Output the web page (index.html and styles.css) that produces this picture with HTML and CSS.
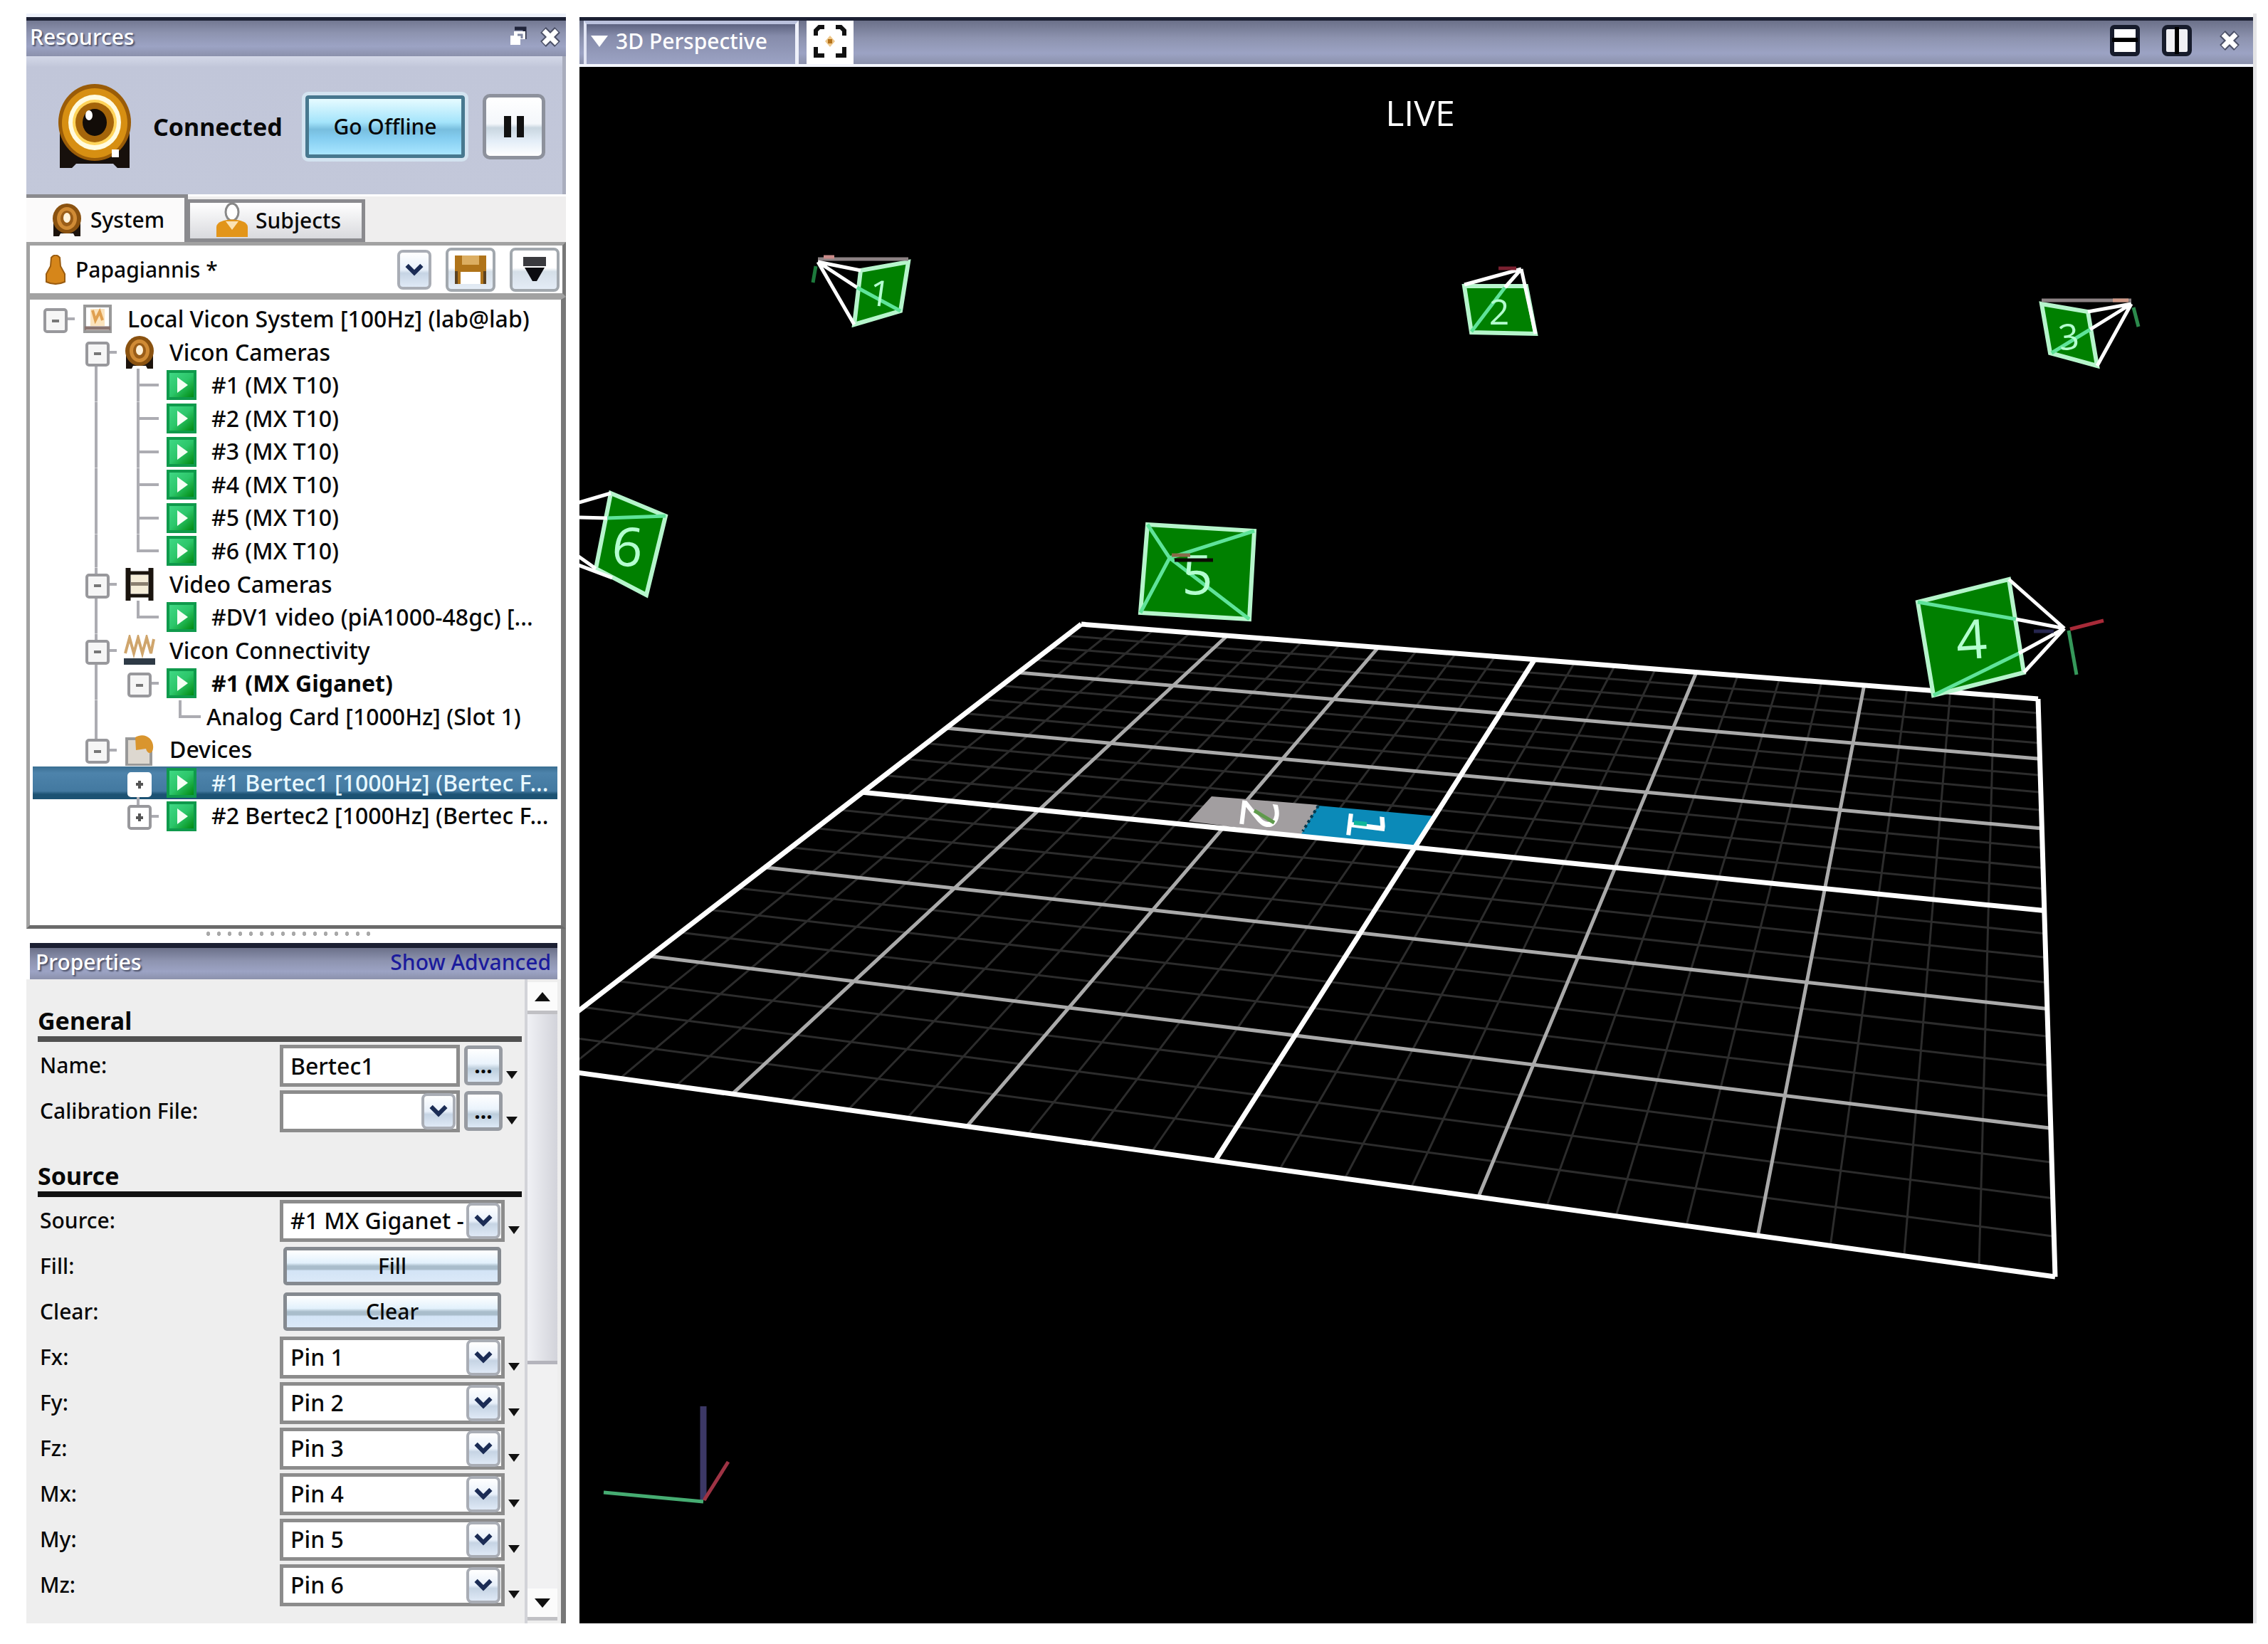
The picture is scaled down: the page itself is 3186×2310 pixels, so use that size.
FILE: index.html
```html
<!DOCTYPE html>
<html lang="en">
<head>
<meta charset="utf-8">
<title>Resources - 3D Perspective</title>
<link rel="stylesheet" href="styles.css">
</head>
<body>
<svg class="defs" aria-hidden="true">
  <defs>
    <linearGradient id="gPlay" x1="0" y1="0" x2="1" y2="1"><stop offset="0" stop-color="#3fd884"/><stop offset=".5" stop-color="#2cc66a"/><stop offset="1" stop-color="#008a10"/></linearGradient>
  </defs>
  <symbol id="play" viewBox="0 0 42 42"><rect width="42" height="42" fill="#0f9a4c"/><rect x="4" y="4" width="34" height="34" fill="url(#gPlay)"/><path d="M15 10V32L30 21Z" fill="#f4fff4"/></symbol>
  <symbol id="cam" viewBox="0 0 42 46"><path d="M2 20V46H10L12 42H30L32 46H40V20Z" fill="#1c130c"/><ellipse cx="21" cy="21" rx="20" ry="21" fill="#8a5210"/><ellipse cx="21" cy="21" rx="14" ry="16" fill="#d08b35"/><ellipse cx="21" cy="21" rx="9" ry="11" fill="#9a5d18"/><ellipse cx="21" cy="20" rx="5" ry="7" fill="#fff3dc"/></symbol>
  <symbol id="sys" viewBox="0 0 40 40"><rect x="2" y="2" width="36" height="36" fill="#fff" stroke="#999" stroke-width="4"/><rect x="10" y="6" width="20" height="24" fill="#fbe3bd"/><path d="M13 8L17 22L23 10L27 22" fill="none" stroke="#e0a050" stroke-width="4"/><path d="M2 33H38" stroke="#8a7470" stroke-width="5"/></symbol>
  <symbol id="film" viewBox="0 0 44 46"><path d="M6 0V46M38 0V46" stroke="#1a140e" stroke-width="7"/><path d="M8 7H36M8 39H36" stroke="#1a140e" stroke-width="5"/><rect x="10" y="10" width="24" height="10" fill="#f4ecd8"/><rect x="10" y="20" width="24" height="5" fill="#8a7f70"/><rect x="10" y="25" width="24" height="11" fill="#f4ecd8"/></symbol>
  <symbol id="conn" viewBox="0 0 44 44"><path d="M2 26L8 4L14 26L20 4L26 26L32 4L38 26L42 6" fill="none" stroke="#cfa56c" stroke-width="4"/><rect y="33" width="44" height="9" fill="#2e3a46"/></symbol>
  <symbol id="dev" viewBox="0 0 42 44"><path d="M3 6H24L37 22V43H3Z" fill="#ddd8d0" stroke="#999" stroke-width="4"/><path d="M15 4C28 -4 42 6 40 20C39 28 32 28 30 20L16 22Z" fill="#d9952e"/></symbol>
  <symbol id="chev" viewBox="0 0 30 20"><path d="M3 3L15 15L27 3" fill="none" stroke="#1b2c55" stroke-width="7"/></symbol>
  <symbol id="x" viewBox="0 0 28 28"><path d="M4 4L24 24M24 4L4 24" stroke="#4a4f66" stroke-width="11"/><path d="M5 5L23 23M23 5L5 23" stroke="#fff" stroke-width="7"/></symbol>
</svg>
<main class="app">
  <aside class="side">
    <header class="bar side-bar">
      <h1 class="bar-title">Resources</h1>
      <button class="bare" aria-label="Restore"><svg width="28" height="30" viewBox="0 0 28 30"><path d="M10 3H24V18" fill="none" stroke="#20243a" stroke-width="5"/><path d="M9 7H25V18H18V26H4V13H9Z" fill="#fff"/><path d="M14 12H20V17" fill="none" stroke="#8087a2" stroke-width="3"/></svg></button>
      <button class="bare" aria-label="Close"><svg width="28" height="28"><use href="#x"/></svg></button>
    </header>
    <section class="status">
      <svg class="bigcam" viewBox="0 0 104 120" aria-hidden="true"><path d="M3 60V118H20L26 112H78L84 118H101V60Z" fill="#17100c"/><ellipse cx="52" cy="54" rx="51" ry="54" fill="#9a5c08"/><ellipse cx="52" cy="55" rx="46" ry="49" fill="#d78f12"/><ellipse cx="52" cy="54" rx="37" ry="39" fill="#fffbe0"/><ellipse cx="52" cy="54" rx="31" ry="32" fill="#ffd45a"/><ellipse cx="52" cy="54" rx="27" ry="28" fill="#a5650a"/><ellipse cx="52" cy="54" rx="17" ry="19" fill="#120c08"/><ellipse cx="44" cy="44" rx="5" ry="7" fill="#fff"/><rect x="76" y="92" width="10" height="11" fill="#fff"/></svg>
      <strong class="state">Connected</strong>
      <button class="offline">Go Offline</button>
      <button class="pause" aria-label="Pause"><svg width="32" height="30"><path d="M7 0V30M25 0V30" stroke="#111" stroke-width="10"/></svg></button>
    </section>
    <nav class="tabs" role="tablist">
      <button class="tab tab-on" role="tab" aria-selected="true"><svg width="42" height="48"><use href="#cam"/></svg>System</button>
      <button class="tab" role="tab" aria-selected="false"><svg width="46" height="50" viewBox="0 0 46 50"><ellipse cx="23" cy="13" rx="9" ry="12" fill="#fff" stroke="#888" stroke-width="3"/><path d="M1 48V34C1 20 45 20 45 34V48Z" fill="#e2951a"/><path d="M14 26L23 38L32 26" fill="#fbe3b4"/></svg>Subjects</button>
    </nav>
    <section class="tools">
      <div class="combo node-combo">
        <svg width="28" height="42" viewBox="0 0 28 42"><path d="M8 4Q14 -3 20 4L21 16L27 27V38Q14 44 1 38V27L7 16Z" fill="#d6861a" stroke="#9a5c10" stroke-width="2"/></svg>
        <select class="field" aria-label="Configuration"><option>Papagiannis *</option></select>
        <span class="drop"><svg width="26" height="20"><use href="#chev"/></svg></span>
      </div>
      <button class="tool" aria-label="Save"><svg width="44" height="40" viewBox="0 0 44 40"><path d="M0 0H44V40H0Z" fill="#b0741a"/><rect x="10" y="0" width="24" height="13" fill="#dcae62"/><rect x="8" y="23" width="28" height="17" fill="#fff"/><path d="M2 22V40M42 22V40" stroke="#5c4220" stroke-width="4"/></svg></button>
      <button class="tool" aria-label="Menu"><svg width="34" height="36" viewBox="0 0 34 36"><path d="M1 0H33V13H1Z" fill="#3a3a3e"/><path d="M3 15H31L20 34H14Z" fill="#0c0c10"/></svg></button>
    </section>
    <ul class="tree" role="tree">
      <li class="node"><i class="c exp r"></i><i class="ic"><svg width="40" height="40"><use href="#sys"/></svg></i><span class="t">Local Vicon System [100Hz] (lab@lab)</span></li>
      <li class="node"><i class="c"></i><i class="c exp d r"></i><i class="ic"><svg width="42" height="46"><use href="#cam"/></svg></i><span class="t">Vicon Cameras</span></li>
      <li class="node"><i class="c"></i><i class="c u d"></i><i class="c u d r"></i><i class="ic"><svg width="42" height="42"><use href="#play"/></svg></i><span class="t">#1 (MX T10)</span></li>
      <li class="node"><i class="c"></i><i class="c u d"></i><i class="c u d r"></i><i class="ic"><svg width="42" height="42"><use href="#play"/></svg></i><span class="t">#2 (MX T10)</span></li>
      <li class="node"><i class="c"></i><i class="c u d"></i><i class="c u d r"></i><i class="ic"><svg width="42" height="42"><use href="#play"/></svg></i><span class="t">#3 (MX T10)</span></li>
      <li class="node"><i class="c"></i><i class="c u d"></i><i class="c u d r"></i><i class="ic"><svg width="42" height="42"><use href="#play"/></svg></i><span class="t">#4 (MX T10)</span></li>
      <li class="node"><i class="c"></i><i class="c u d"></i><i class="c u d r"></i><i class="ic"><svg width="42" height="42"><use href="#play"/></svg></i><span class="t">#5 (MX T10)</span></li>
      <li class="node"><i class="c"></i><i class="c u d"></i><i class="c u r"></i><i class="ic"><svg width="42" height="42"><use href="#play"/></svg></i><span class="t">#6 (MX T10)</span></li>
      <li class="node"><i class="c"></i><i class="c exp u d r"></i><i class="ic"><svg width="44" height="46"><use href="#film"/></svg></i><span class="t">Video Cameras</span></li>
      <li class="node"><i class="c"></i><i class="c u d"></i><i class="c u r"></i><i class="ic"><svg width="42" height="42"><use href="#play"/></svg></i><span class="t">#DV1 video (piA1000-48gc) [...</span></li>
      <li class="node"><i class="c"></i><i class="c exp u d r"></i><i class="ic"><svg width="44" height="44"><use href="#conn"/></svg></i><span class="t">Vicon Connectivity</span></li>
      <li class="node"><i class="c"></i><i class="c u d"></i><i class="c exp r"></i><i class="ic"><svg width="42" height="42"><use href="#play"/></svg></i><span class="t t-bold">#1 (MX Giganet)</span></li>
      <li class="node"><i class="c"></i><i class="c u d"></i><i class="c"></i><i class="c u r"></i><span class="t t-leaf">Analog Card [1000Hz] (Slot 1)</span></li>
      <li class="node"><i class="c"></i><i class="c exp u r"></i><i class="ic"><svg width="42" height="44"><use href="#dev"/></svg></i><span class="t">Devices</span></li>
      <li class="node node-on" aria-selected="true"><i class="c"></i><i class="c"></i><i class="c exp plus d"></i><i class="ic"><svg width="42" height="42"><use href="#play"/></svg></i><span class="t">#1 Bertec1 [1000Hz] (Bertec F...</span></li>
      <li class="node"><i class="c"></i><i class="c"></i><i class="c exp plus u r"></i><i class="ic"><svg width="42" height="42"><use href="#play"/></svg></i><span class="t">#2 Bertec2 [1000Hz] (Bertec F...</span></li>
    </ul>
    <div class="splitter"><i class="grip"></i></div>
    <header class="bar props-bar"><h2 class="bar-title">Properties</h2><a class="adv" href="#advanced">Show Advanced</a></header>
    <section class="props">
      <form class="form">
        <h3 class="group">General</h3>
        <div class="row"><label for="name">Name:</label><input class="field ctl" id="name" value="Bertec1"><button type="button" class="more">...</button><i class="tri"></i></div>
        <div class="row"><label for="cal">Calibration File:</label><div class="combo ctl"><select class="field" id="cal"><option></option></select><span class="drop"><svg width="26" height="20"><use href="#chev"/></svg></span></div><button type="button" class="more">...</button><i class="tri"></i></div>
        <h3 class="group group-2">Source</h3>
        <div class="row"><label for="src">Source:</label><div class="combo ctl"><select class="field" id="src"><option>#1 MX Giganet -</option></select><span class="drop"><svg width="26" height="20"><use href="#chev"/></svg></span></div><i class="tri"></i></div>
        <div class="row"><label for="fill">Fill:</label><button type="button" class="push" id="fill">Fill</button></div>
        <div class="row"><label for="clear">Clear:</label><button type="button" class="push" id="clear">Clear</button></div>
        <div class="row"><label for="fx">Fx:</label><div class="combo ctl"><select class="field" id="fx"><option>Pin 1</option></select><span class="drop"><svg width="26" height="20"><use href="#chev"/></svg></span></div><i class="tri"></i></div>
        <div class="row"><label for="fy">Fy:</label><div class="combo ctl"><select class="field" id="fy"><option>Pin 2</option></select><span class="drop"><svg width="26" height="20"><use href="#chev"/></svg></span></div><i class="tri"></i></div>
        <div class="row"><label for="fz">Fz:</label><div class="combo ctl"><select class="field" id="fz"><option>Pin 3</option></select><span class="drop"><svg width="26" height="20"><use href="#chev"/></svg></span></div><i class="tri"></i></div>
        <div class="row"><label for="mx">Mx:</label><div class="combo ctl"><select class="field" id="mx"><option>Pin 4</option></select><span class="drop"><svg width="26" height="20"><use href="#chev"/></svg></span></div><i class="tri"></i></div>
        <div class="row"><label for="my">My:</label><div class="combo ctl"><select class="field" id="my"><option>Pin 5</option></select><span class="drop"><svg width="26" height="20"><use href="#chev"/></svg></span></div><i class="tri"></i></div>
        <div class="row"><label for="mz">Mz:</label><div class="combo ctl"><select class="field" id="mz"><option>Pin 6</option></select><span class="drop"><svg width="26" height="20"><use href="#chev"/></svg></span></div><i class="tri"></i></div>
      </form>
      <div class="scroll">
        <button class="sb" aria-label="Scroll up"><svg width="22" height="13"><path d="M0 13L11 0L22 13Z" fill="#111"/></svg></button>
        <div class="track"><div class="thumb"></div></div>
        <button class="sb" aria-label="Scroll down"><svg width="22" height="13"><path d="M0 0H22L11 13Z" fill="#111"/></svg></button>
      </div>
    </section>
  </aside>
  <section class="view">
    <header class="bar view-bar">
      <button class="view-tab"><svg width="24" height="16"><path d="M0 0H24L12 16Z" fill="#fff"/></svg>3D Perspective</button>
      <button class="focus" aria-label="Zoom to fit"><svg width="46" height="46" viewBox="0 0 46 46"><path d="M3 15V8L8 3H15M31 3H38L43 8V15M3 31V43H15M31 43H43V31" fill="none" stroke="#111" stroke-width="6"/><path d="M23 15L30 23L23 31L16 23Z" fill="#eec78a"/><rect x="20" y="20" width="6" height="6" fill="#b5731c"/></svg></button>
      <span class="grow"></span>
      <button class="bare" aria-label="Split horizontally"><svg width="42" height="44" viewBox="0 0 42 44"><rect x="3" y="3" width="36" height="38" rx="3" fill="#fff" stroke="#171c2c" stroke-width="6"/><path d="M3 21H39" stroke="#000" stroke-width="6"/></svg></button>
      <button class="bare" aria-label="Split vertically"><svg width="42" height="44" viewBox="0 0 42 44"><rect x="3" y="3" width="36" height="38" rx="5" fill="#f0f0f4" stroke="#171c2c" stroke-width="6"/><path d="M21 3V41" stroke="#000" stroke-width="6"/></svg></button>
      <button class="bare shut" aria-label="Close view"><svg width="28" height="28"><use href="#x"/></svg></button>
    </header>
    <svg class="scene" viewBox="814 94 2351 2187" preserveAspectRatio="xMidYMid slice">
      <path id="minor" class="g-minor"/>
      <path id="major" class="g-major"/>
      <g>
        <path d="M1702 1119L1852 1131L1828 1174L1670 1154Z" fill="#a29ea0"/>
        <path d="M1852 1132L2018 1147L1990 1190L1828 1172Z" fill="#0b8ab8"/>
        <path d="M1852 1132L1830 1168" stroke="#04384c" stroke-width="4" stroke-dasharray="4 4"/>
        <text class="plate" transform="translate(1768 1145) rotate(97)">2</text>
        <text class="plate" transform="translate(1918 1160) rotate(97)">1</text>
        <path d="M1762 1139L1790 1156" stroke="#5f9a4c" stroke-width="5"/>
        <path d="M1902 1156L1920 1158" stroke="#12b79a" stroke-width="6"/>
      </g>
      <path id="axis" class="g-axis"/>
      <g class="cam">
        <path class="face" d="M1209 380L1276 368L1265 437L1200 456Z"/>
        <path d="M1149 364H1276" stroke="#8c8284"/><path class="ray" d="M1149 368L1209 380M1149 368L1200 456M1149 368L1204 404"/><path class="in" d="M1204 404L1265 437"/>
        <path d="M1146 374L1142 397" stroke="#1d7a3c"/><path d="M1157 361H1172" stroke="#c98a88"/>
        <text class="num sm" transform="translate(1236 411) rotate(8)">1</text>
      </g>
      <g class="cam">
        <path class="face" d="M2057 402H2144L2157 469L2067 467Z"/>
        <path class="ray" d="M2137 378L2057 400M2137 378L2157 469M2137 378L2114 404"/><path class="in" d="M2114 404L2067 466"/>
        <path d="M2105 377H2130" stroke="#7a2030"/>
        <text class="num sm" transform="translate(2106 437)">2</text>
      </g>
      <g class="cam">
        <path class="face" d="M2868 427L2933 438L2946 514L2880 496Z"/>
        <path d="M2868 422H2994" stroke="#8c8284"/><path class="ray" d="M2994 427L2933 438M2994 427L2946 514M2994 427L2936 463"/><path class="in" d="M2936 463L2882 496"/>
        <path d="M2997 432L3004 459" stroke="#2c8a4c"/><path d="M2968 422H2990" stroke="#d09a88"/>
        <text class="num sm" transform="translate(2906 472) rotate(-6)">3</text>
      </g>
      <g class="cam">
        <path class="face" d="M2694 846L2822 814L2843 945L2716 977Z"/>
        <path class="in" d="M2694 846L2832 870M2836 918L2716 977"/>
        <path class="ray" d="M2900 883L2822 814M2900 883L2832 870M2900 883L2836 918M2900 883L2843 945"/>
        <path d="M2857 887H2885" stroke="#26264e"/><path d="M2908 884L2955 872" stroke="#a82a38"/><path d="M2906 886L2917 948" stroke="#35985a"/>
        <text class="num" transform="translate(2769 896) rotate(-4)">4</text>
      </g>
      <g class="cam">
        <path class="face" d="M1612 737L1762 746L1755 870L1602 861Z"/>
        <path class="in" d="M1643 784L1612 737M1643 784L1762 746M1643 784L1755 870M1643 784L1602 861"/>
        <text class="num" transform="translate(1682 805)">5</text>
        <path d="M1646 780H1672" stroke="#8a6a48"/><path d="M1650 787H1704" stroke="#0c0a04"/>
      </g>
      <g class="cam">
        <path class="face" d="M858 693L935 725L908 836L837 799Z"/>
        <path class="in" d="M853 728L935 725"/>
        <path class="ray" d="M858 693L810 707M853 728L810 727M837 799L810 780M860 812L810 793"/>
        <text class="num" transform="translate(882 766) rotate(6)">6</text>
      </g>
      <g fill="none" stroke-width="5"><path d="M988 1976V2108" stroke="#3c3866" stroke-width="9"/><path d="M848 2097L988 2110" stroke="#46ac72"/><path d="M989 2108L1023 2054" stroke="#9e3344"/></g>
      <text class="live" x="1995" y="177">LIVE</text>
    </svg>
  </section>
</main>
<script src="grid.js"></script>
</body>
</html>
```
FILE: styles.css
```css
* { box-sizing: border-box; }
body { margin: 0; min-height: 100vh; display: flex; padding: 19px 16px 29px 37px; background: #fff; color: #080808; font-family: "Noto Sans", "Open Sans", sans-serif; font-size: 30px; font-weight: 500; line-height: 44px; }
button, input, select { font: inherit; color: inherit; margin: 0; padding: 0; border: 0; background: none; }
svg { display: block; flex: none; }
h1, h2, h3 { margin: 0; font-size: 30px; font-weight: 500; }
.defs { position: absolute; width: 0; height: 0; }
.app { flex: 1; display: grid; grid-template-columns: 758px 1fr; gap: 19px; }
.grow { flex: 1; }

.bar { display: flex; align-items: center; border-top: 7px solid #1c2033; background: linear-gradient(#6b7089, #8d93af 40%, #9ca3c4 75%, #8b91ac); }
.bar-title { flex: 1; color: #fff; text-shadow: 2px 2px 2px #4a4f66; }
.bare { display: flex; }

.side { display: flex; flex-direction: column; min-width: 0; background: linear-gradient(#777, #777) 100% 0 / 7px 100% no-repeat; }
.side-bar { height: 60px; padding: 0 8px 0 5px; gap: 18px; border-top: 5px solid #eef2fb; box-shadow: inset 0 5px #1c2033; }
.status { height: 194px; display: flex; align-items: center; padding: 4px 24px 0 44px; background: linear-gradient(#d3d8e8, #c1c6d9 8%, #c3c8da); border-right: 5px solid #a9adbd; }
.bigcam { width: 104px; height: 120px; }
.state { flex: 1; padding-left: 30px; font-size: 34px; }
.offline { width: 224px; height: 88px; border: 5px solid #47788f; outline: 5px solid #d3e3f0; border-radius: 4px; background: linear-gradient(#e6fbff, #a4e4fb 42%, #78bede 55%, #84cdf0 70%, #a9e6ff); }
.pause { display: flex; align-items: center; justify-content: center; width: 88px; height: 92px; margin-left: 25px; border: 5px solid #8d919c; border-radius: 10px; background: linear-gradient(#fff, #f4f7fb 45%, #c9d6e0 52%, #e4eef8 75%, #fff); }

.tabs { display: flex; align-items: flex-end; height: 67px; background: #efeeee; border-top: 3px solid #fff; }
.tab { display: flex; align-items: center; gap: 10px; width: 249px; height: 60px; padding-left: 36px; border: 5px solid #8a8a8e; border-left-width: 3px; background: linear-gradient(#fff, #d9dade); }
.tab-on { gap: 12px; width: 227px; height: 67px; margin-top: -3px; border-bottom: 0; border-left: 0; background: #fbfafa; }

.tools { display: flex; align-items: center; height: 77px; padding: 4px; border: 5px solid #a2a2a2; border-right-color: #777; background: #fff; gap: 20px; }
.combo { position: relative; display: flex; align-items: center; background: #fff; }
.field { appearance: none; width: 100%; height: 100%; border-radius: 0; outline: 0; }
.node-combo { flex: 1; gap: 14px; padding-left: 18px; height: 56px; }
.drop { position: absolute; right: 0; top: 0; bottom: 0; width: 48px; display: flex; align-items: center; justify-content: center; border: 4px solid #a9adb5; border-radius: 8px; background: linear-gradient(#fff, #e8f0fa 50%, #c6d4e4 60%, #dfe9f6); pointer-events: none; }
.tool { display: flex; align-items: center; justify-content: center; width: 70px; height: 62px; border: 4px solid #a2a8ae; border-radius: 8px; background: linear-gradient(#fff 45%, #d5dfe8 55%, #e4ecf6); }

.tree { list-style: none; margin: 0; padding: 4px 5px 130px 4px; flex: none; height: 888px; border: 5px solid #a2a2a2; border-top-width: 4px; border-right: 7px solid #777; border-bottom-color: #6a6a6a; display: grid; grid-template-rows: repeat(16, 1fr); background: #fff; font-size: 32px; }
.node { display: flex; align-items: stretch; white-space: nowrap; min-height: 0; }
.node-on { color: #e8f8ff; background: linear-gradient(#3a6f92, #4d83ab 20%, #4379a0 75%, #1c5273 85%); }
.c { position: relative; width: 59px; flex: none; --up: linear-gradient(#acacb2, #acacb2) 50% 0 / 0 0; --dn: var(--up); --rt: var(--up); background: var(--up) no-repeat, var(--dn) no-repeat, var(--rt) no-repeat; }
.c.u { --up: linear-gradient(#acacb2, #acacb2) 50% 0 / 4px 52%; }
.c.d { --dn: linear-gradient(#acacb2, #acacb2) 50% 100% / 4px 50%; }
.c.r { --rt: linear-gradient(#acacb2, #acacb2) 100% 50% / 31px 4px; }
.exp::before { content: ""; position: absolute; left: 15px; top: 8px; width: 26px; height: 27px; border: 4px solid #98989c; border-radius: 5px; background: linear-gradient(#777, #777) center / 10px 4px no-repeat, #f6f6f6; }
.exp.plus::before { background: linear-gradient(#555, #555) center / 10px 4px no-repeat, linear-gradient(#555, #555) center / 4px 11px no-repeat, #fff; }
.node-on .exp::before { border-color: #fff; }
.ic { display: flex; align-items: center; justify-content: center; width: 59px; padding-left: 4px; flex: none; }
.t { padding-left: 15px; line-height: 46px; }
.t-leaf { padding-left: 8px; }
.t-bold { font-weight: 700; }

.splitter { flex: none; display: flex; justify-content: center; height: 20px; padding-right: 12px; border-right: 7px solid #777; background: #fff; }
.grip { width: 243px; height: 14px; background: radial-gradient(circle, #a9a9a9 3px, transparent 3px) 0 0 / 15px 14px; }
.props-bar { height: 51px; margin: 0 12px 0 5px; padding: 0 9px 5px 8px; }
.adv { color: #1b1b9c; text-decoration: none; }
.props { flex: 1; display: flex; border-right: 7px solid #777; padding-right: 5px; background: #eee; }
.form { flex: 1; min-width: 0; padding: 24px 0 0 16px; }
.group { width: 680px; height: 64px; margin-bottom: 1px; padding-top: 12px; border-bottom: 8px solid #505050; font-size: 34px; font-weight: 700; }
.group-2 { height: 60px; margin-top: 29px; border-bottom-color: #111; padding-top: 8px; }
.row { display: flex; align-items: center; height: 64px; }
.row label { width: 340px; padding-left: 3px; flex: none; }
.row .field { border: 5px solid #8c8c8c; background: #fff; padding: 0 50px 0 10px; font-size: 32px; }
.row .ctl { width: 316px; height: 59px; }
.row .ctl:has(+ .more) { width: 253px; }
.row .drop { right: 6px; top: 4px; bottom: 4px; width: 48px; }
.more { width: 54px; height: 56px; margin-left: 6px; border: 5px solid #979ba2; border-radius: 6px; line-height: 36px; background: linear-gradient(#fff, #eaf3fc 45%, #bccddb 60%, #dde9f6); font-weight: 700; }
.tri { width: 0; height: 0; margin: 26px 0 0 5px; border: 8px solid transparent; border-top: 11px solid #111; border-bottom: 0; }
.push { width: 306px; height: 54px; margin-left: 5px; border: 5px solid #858a90; border-radius: 5px; background: linear-gradient(#fff, #e2f1fc 40%, #a9bdcb 50%, #a9bdcb 60%, #d3e4f6 65%, #dbe9f8); line-height: 40px; }
.scroll { display: flex; flex-direction: column; width: 46px; border-left: 4px solid #d2d3d8; padding: 4px 0; }
.sb { display: flex; align-items: center; justify-content: center; height: 45px; border-bottom: 5px solid #c0c0c4; background: #fbfbfb; }
.track { flex: 1; background: #f1f1f2; }
.thumb { height: 61%; background: linear-gradient(90deg, #f0f1f5, #d2d3da); border-bottom: 5px solid #b4b4bc; }

.view { display: flex; flex-direction: column; min-width: 0; padding-top: 5px; border-right: 5px solid #e4e4e6; }
.view-bar { height: 70px; padding: 0 19px 0 6px; gap: 31px; border-top-width: 5px; border-bottom: 4px solid #f4f6ff; }
.view-bar .bare { padding-bottom: 6px; }
.view-bar .shut { margin-left: 8px; }
.view-tab { display: flex; align-items: center; gap: 11px; width: 302px; height: 61px; padding: 0 0 8px 6px; border-top: 5px solid #b9c0dc; border-left: 4px solid #e2e5f4; border-right: 5px solid #eef0fa; background: linear-gradient(#5c6280, #868cab 30%, #9ca3c4); color: #fff; }
.focus { display: flex; align-items: center; justify-content: center; width: 66px; height: 61px; margin-left: -20px; padding-bottom: 4px; background: #fff; }
.scene { flex: 1; width: 100%; height: 0; min-height: 0; background: #000; }
.g-minor { fill: none; stroke: #2c2c2c; stroke-width: 3; }
.g-major { fill: none; stroke: #aaa; stroke-width: 5; }
.g-axis { fill: none; stroke: #fff; stroke-width: 7; }
.cam path { fill: none; stroke-width: 5; }
.cam .face { fill: #008000; stroke: #b6f5cc; stroke-width: 6; }
.cam .ray { stroke: #fff; }
.cam .in { stroke: #5fe39a; }
.num { fill: #b4ffd0; font-family: "Open Sans", sans-serif; font-size: 76px; font-weight: 400; text-anchor: middle; dominant-baseline: central; }
.sm { font-size: 50px; }
.plate { fill: #fff; font-family: "DejaVu Sans", sans-serif; font-size: 72px; text-anchor: middle; dominant-baseline: central; }
.live { fill: #fff; font-family: "Open Sans", sans-serif; font-size: 50px; font-weight: 400; text-anchor: middle; }
```
FILE: grid.js
```js
// Projects the capture-volume floor (a unit square) onto its four screen corners.
const corners = { a: [1519, 877], b: [2863, 982], c: [2887, 1794], d: [717, 1494] };
const { a, b, c, d } = corners;
const dx1 = b[0] - c[0], dx2 = d[0] - c[0], sx = a[0] - b[0] + c[0] - d[0];
const dy1 = b[1] - c[1], dy2 = d[1] - c[1], sy = a[1] - b[1] + c[1] - d[1];
const det = dx1 * dy2 - dx2 * dy1;
const g = (sx * dy2 - dx2 * sy) / det;
const h = (dx1 * sy - sx * dy1) / det;
const m = [b[0] - a[0] + g * b[0], d[0] - a[0] + h * d[0], a[0], b[1] - a[1] + g * b[1], d[1] - a[1] + h * d[1], a[1]];

function point(u, v) {
  const w = g * u + h * v + 1;
  return ((m[0] * u + m[1] * v + m[2]) / w).toFixed(1) + ' ' + ((m[3] * u + m[4] * v + m[5]) / w).toFixed(1);
}

const cells = 24;
const paths = { minor: '', major: '', axis: '' };
for (let i = 0; i <= cells; i++) {
  const kind = i % 12 === 0 ? 'axis' : i % 4 === 0 ? 'major' : 'minor';
  const t = i / cells;
  paths[kind] += `M${point(t, 0)}L${point(t, 1)}M${point(0, t)}L${point(1, t)}`;
}
for (const id in paths) document.getElementById(id).setAttribute('d', paths[id]);
```
